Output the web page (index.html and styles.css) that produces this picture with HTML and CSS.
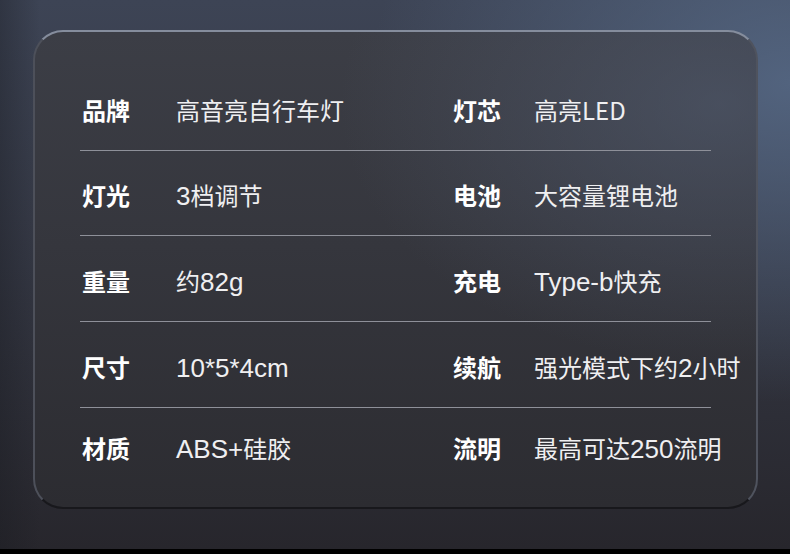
FILE: index.html
```html
<!DOCTYPE html>
<html lang="zh-CN">
<head>
<meta charset="utf-8">
<title>规格参数</title>
<link rel="stylesheet" href="styles.css">
</head>
<body>
<div class="page">
  <div class="card">
    <div class="row">
      <span class="label">品牌</span><span class="value">高音亮自行车灯</span>
      <span class="label">灯芯</span><span class="value">高亮LED</span>
    </div>
    <div class="row">
      <span class="label">灯光</span><span class="value"><span class="lt">3</span>档调节</span>
      <span class="label">电池</span><span class="value">大容量锂电池</span>
    </div>
    <div class="row">
      <span class="label">重量</span><span class="value">约<span class="lt">82g</span></span>
      <span class="label">充电</span><span class="value"><span class="lt">Type-b</span>快充</span>
    </div>
    <div class="row">
      <span class="label">尺寸</span><span class="value"><span class="lt">10*5*4cm</span></span>
      <span class="label">续航</span><span class="value">强光模式下约<span class="lt">2</span>小时</span>
    </div>
    <div class="row">
      <span class="label">材质</span><span class="value"><span class="lt">ABS+</span>硅胶</span>
      <span class="label">流明</span><span class="value">最高可达<span class="lt">250</span>流明</span>
    </div>
  </div>
</div>
</body>
</html>
```

FILE: styles.css
```css
html, body {
  margin: 0;
  padding: 0;
}
body {
  background: #000;
  width: 790px;
  height: 554px;
  overflow: hidden;
  font-family: "Noto Sans CJK SC", "Noto Sans", sans-serif;
}
.page {
  height: 549px;
  box-sizing: border-box;
  padding: 30px 0 0 33px;
  background:
    radial-gradient(ellipse 420px 320px at 100% 15%, rgba(88,108,138,0.8), rgba(88,108,138,0) 100%),
    linear-gradient(90deg, rgba(24,26,32,0.35) 0, rgba(24,26,32,0) 40px),
    linear-gradient(180deg, #3d4455 0%, #363a47 40%, #27262c 100%);
}
.card {
  width: 725px;
  height: 479px;
  box-sizing: border-box;
  border-radius: 30px;
  border: 2px solid;
  border-color: #858d9d #4f535e #18181c #4d505a;
  padding: 33px 0 0 45px;
  background:
    radial-gradient(ellipse 380px 260px at 95% 15%, rgba(82,92,112,0.6), rgba(82,92,112,0) 100%),
    linear-gradient(180deg, #3c3e46 0%, #35363d 45%, #2c2c31 100%);
}
.row {
  width: 631px;
  display: grid;
  grid-template-columns: 96px 275px 83px auto;
  align-items: baseline;
  padding: 32.5px 0 28.2px;
  line-height: 24px;
  font-size: 24px;
  border-bottom: 1px solid #8e9099;
  white-space: nowrap;
}
.row:last-child {
  border-bottom: none;
  padding-top: 28.5px;
}
.label {
  font-weight: 700;
  color: #ffffff;
  padding-left: 2px;
}
.value {
  font-weight: 400;
  color: #efeff1;
  height: 24px;
}
.lt {
  font-family: "Liberation Sans", Arial, sans-serif;
  font-size: 26px;
  line-height: 20px;
}
```
